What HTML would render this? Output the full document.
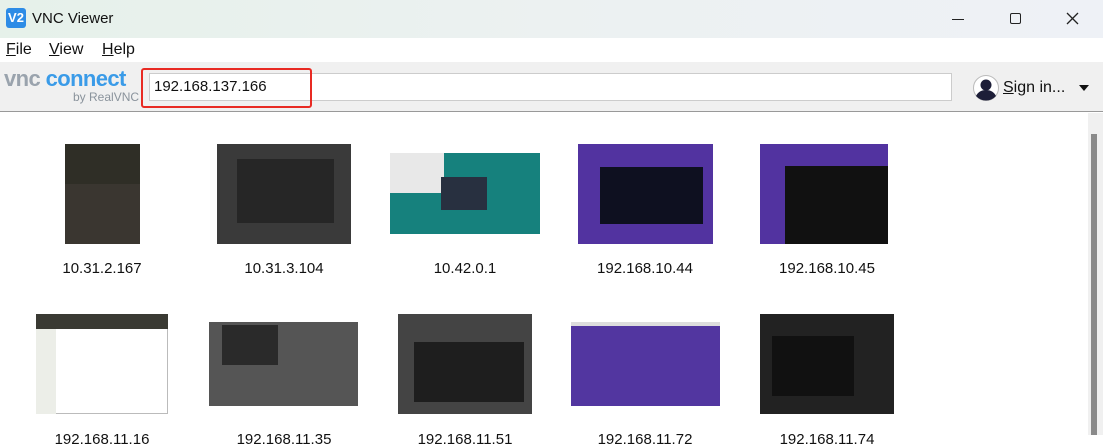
<!DOCTYPE html><html><head><style>
*{margin:0;padding:0;box-sizing:border-box}
body{width:1103px;height:435px;overflow:hidden;background:#fff;font-family:"Liberation Sans",Arial,sans-serif;position:relative}
.a{position:absolute}
.lbl{position:absolute;font-size:15px;color:#111;text-align:center;width:160px}
</style></head><body>
<div class="a" style="left:0;top:0;width:1103px;height:38px;background:linear-gradient(90deg,#e6f1ea 0%,#ecf1f1 50%,#eef1f6 100%)"></div>
<div class="a" style="left:6px;top:8px;width:20px;height:20px;background:#2d8ce6;border-radius:3px;color:#fff;font-size:13px;line-height:20px;text-align:center;font-weight:bold">V2</div>
<div class="a" style="left:32px;top:10px;font-size:15px;color:#111">VNC Viewer</div>
<div class="a" style="left:952px;top:19px;width:12px;height:1px;background:#222"></div>
<div class="a" style="left:1010px;top:13px;width:11px;height:11px;border:1.3px solid #222;border-radius:2px"></div>
<svg class="a" style="left:1066px;top:12px" width="13" height="13"><path d="M1 1L12 12M12 1L1 12" stroke="#222" stroke-width="1.3"/></svg>
<div class="a" style="left:6px;top:41px;font-size:16px;color:#111"><u>F</u>ile</div>
<div class="a" style="left:49px;top:41px;font-size:16px;color:#111"><u>V</u>iew</div>
<div class="a" style="left:102px;top:41px;font-size:16px;color:#111"><u>H</u>elp</div>
<div class="a" style="left:0;top:62px;width:1103px;height:50px;background:#f0f0f0;border-bottom:1px solid #999"></div>
<div class="a" style="left:4px;top:66px;font-size:22px;letter-spacing:-0.6px;color:#9aa3ad;font-weight:bold">vnc <span style="color:#3a9be8">connect</span></div>
<div class="a" style="left:73px;top:90px;font-size:12px;color:#8a939c">by RealVNC</div>
<div class="a" style="left:149px;top:73px;width:803px;height:28px;background:#fff;border:1px solid #ccc"></div>
<div class="a" style="left:141px;top:68px;width:171px;height:40px;border:2px solid #e82a23;border-radius:3px"></div>
<div class="a" style="left:154px;top:78px;font-size:15px;color:#111">192.168.137.166</div>
<svg class="a" style="left:973px;top:75px" width="26" height="26"><circle cx="13" cy="13" r="12.5" fill="#fff" stroke="#bbb"/><circle cx="13" cy="10" r="5.5" fill="#1d1e38"/><path d="M3 21Q6 15 13 15Q20 15 23 21Q19 25.5 13 25.5Q7 25.5 3 21Z" fill="#1d1e38"/></svg>
<div class="a" style="left:1003px;top:79px;font-size:16px;color:#111"><u>S</u>ign in...</div>
<svg class="a" style="left:1079px;top:85px" width="10" height="6"><path d="M0 0H10L5 6Z" fill="#111"/></svg>
<div class="a" style="left:1088px;top:113px;width:15px;height:322px;background:#f0f0f0"></div>
<div class="a" style="left:1091px;top:134px;width:6px;height:301px;background:#8a8a8a"></div>
<div class="a" style="left:65px;top:144px;width:75px;height:100px;background:#3a3630"></div>
<div class="a" style="left:65px;top:144px;width:75px;height:40px;background:#2f2e26"></div>
<div class="a" style="left:217px;top:144px;width:134px;height:100px;background:#3a3a3a"></div>
<div class="a" style="left:237px;top:159px;width:97px;height:64px;background:#262626"></div>
<div class="a" style="left:390px;top:153px;width:150px;height:81px;background:#16817d"></div>
<div class="a" style="left:390px;top:153px;width:54px;height:40px;background:#e8e8e8"></div>
<div class="a" style="left:441px;top:177px;width:46px;height:33px;background:#283040"></div>
<div class="a" style="left:578px;top:144px;width:135px;height:100px;background:#5233a0"></div>
<div class="a" style="left:600px;top:167px;width:103px;height:57px;background:#0e1020"></div>
<div class="a" style="left:760px;top:144px;width:128px;height:100px;background:#5233a0"></div>
<div class="a" style="left:785px;top:166px;width:103px;height:78px;background:#111"></div>
<div class="lbl" style="left:22px;top:260px">10.31.2.167</div>
<div class="lbl" style="left:204px;top:260px">10.31.3.104</div>
<div class="lbl" style="left:385px;top:260px">10.42.0.1</div>
<div class="lbl" style="left:565px;top:260px">192.168.10.44</div>
<div class="lbl" style="left:747px;top:260px">192.168.10.45</div>
<div class="a" style="left:36px;top:314px;width:132px;height:100px;background:#fff;border:1px solid #bbb"></div>
<div class="a" style="left:36px;top:314px;width:132px;height:15px;background:#3a3a33"></div>
<div class="a" style="left:36px;top:329px;width:20px;height:85px;background:#eceee8"></div>
<div class="a" style="left:209px;top:322px;width:149px;height:84px;background:#555"></div>
<div class="a" style="left:222px;top:325px;width:56px;height:40px;background:#2a2a2a"></div>
<div class="a" style="left:398px;top:314px;width:134px;height:100px;background:#444"></div>
<div class="a" style="left:414px;top:342px;width:110px;height:60px;background:#1e1e1e"></div>
<div class="a" style="left:571px;top:322px;width:149px;height:84px;background:#5236a0"></div>
<div class="a" style="left:571px;top:322px;width:149px;height:4px;background:#ddd"></div>
<div class="a" style="left:760px;top:314px;width:134px;height:100px;background:#222"></div>
<div class="a" style="left:772px;top:336px;width:82px;height:60px;background:#111"></div>
<div class="lbl" style="left:22px;top:431px">192.168.11.16</div>
<div class="lbl" style="left:204px;top:431px">192.168.11.35</div>
<div class="lbl" style="left:385px;top:431px">192.168.11.51</div>
<div class="lbl" style="left:565px;top:431px">192.168.11.72</div>
<div class="lbl" style="left:747px;top:431px">192.168.11.74</div>
</body></html>
